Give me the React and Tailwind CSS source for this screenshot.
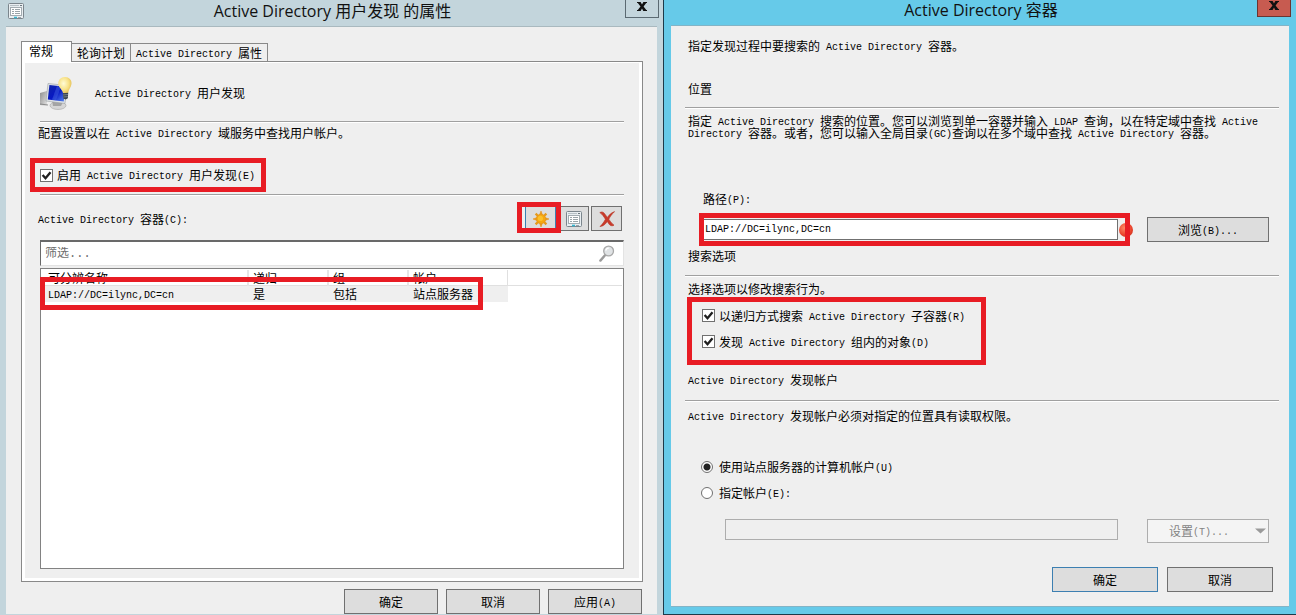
import React from "react";

const containers = [
  { path: "LDAP://DC=ilync,DC=cn", recursive: "是", group: "包括", account: "站点服务器" },
];

// Latin runs are set in a half-width mono face, Chinese runs keep the 12px grid
const Mixed = ({ children }) =>
  children.split(/([\x20-\x7e]+)/).map((part, i) =>
    i % 2 ? (
      <span
        key={i}
        className="font-['Liberation_Mono',monospace] text-[10px] leading-[0px] align-[1px] whitespace-pre-wrap"
      >
        {part}
      </span>
    ) : (
      part
    )
  );

const CloseMark = () => (
  <svg viewBox="0 0 10 9" className="w-[10px] h-[9px]" aria-hidden="true">
    <path
      d="M0 0h3.6L5 2.4 6.4 0H10v1H9.2L6.6 4.4 9.3 8H10v1H6.3L5 6.6 3.6 9H0V8h.8l2.7-3.6L.8 1H0z"
      fill="#111"
    />
  </svg>
);

const ListIcon = () => (
  <svg viewBox="0 0 16 16" className="w-4 h-4" aria-hidden="true">
    <rect x="0.5" y="0.5" width="15" height="15" rx="1" fill="#e9eef1" stroke="#7b858c" />
    <path d="M2 2.5h9" stroke="#b7c0c5" />
    <path d="M12 2.5h2" stroke="#6d7880" />
    <rect x="2.5" y="4.5" width="11" height="8" fill="#fff" stroke="#a3acb1" />
    <path d="M4 6.5h2M7 6.5h5M4 8.5h2M7 8.5h5M4 10.5h2M7 10.5h5" stroke="#9aa4a9" />
    <path d="M6 14.5h3" stroke="#35b6cf" strokeWidth="1.6" />
    <path d="M10 14.5h3" stroke="#9aa4aa" />
  </svg>
);

const SunIcon = () => (
  <svg viewBox="0 0 16 16" className="w-4 h-4" aria-hidden="true">
    <path
      d="M8 0l1.300 3.600h-2.600zM8 16l1.300-3.600h-2.600zM0 8l3.600-1.300v2.600zM16 8l-3.600-1.300v2.600z"
      fill="#e8951a"
      stroke="#e8951a"
      strokeWidth="0.600"
    />
    <path d="M2.600 2.600l10.800 10.800M13.400 2.600L2.600 13.400" stroke="#e59a1c" strokeWidth="2.200" />
    <circle cx="8" cy="8" r="4.700" fill="#f5a80f" stroke="#e5941a" strokeWidth="0.800" />
    <circle cx="7.400" cy="7.400" r="2.600" fill="#fcc02a" />
  </svg>
);

const DeleteIcon = () => (
  <svg viewBox="0 0 16 16" className="w-4 h-4" aria-hidden="true">
    <path
      d="M.8 1.600C2.800.4 4.600 1 5.800 3L8.400 6.400C10.200 3.800 12.400 1.600 15.600.6 13 3 11.200 5.400 9.800 8.200 11.200 10.400 12.800 12.600 15 14.200 12.600 15.400 11 14.600 9.800 12.800L8.200 10.400C6.600 13 5 14.800 1 15.600 3.400 13.200 5 11 6.400 8.200 4.800 5.600 3.200 3.200.8 1.600z"
      fill="#c93a2b"
      stroke="#b5301f"
      strokeWidth="0.6"
    />
  </svg>
);

const SearchIcon = () => (
  <svg viewBox="0 0 16 17" className="w-4 h-[17px]" aria-hidden="true">
    <path d="M6 10.200L1.400 15.600" stroke="#9b9b9b" strokeWidth="2.400" strokeLinecap="round" />
    <circle cx="9.600" cy="6" r="4.900" fill="#e0e3e5" stroke="#a8a8a8" strokeWidth="1.300" />
    <path d="M6.800 5.600a3 3 0 0 1 3-2.400" stroke="#fff" strokeWidth="1.200" fill="none" />
  </svg>
);

const DiscoveryIcon = () => (
  <svg viewBox="0 0 32 34" className="w-8 h-[34px]" aria-hidden="true">
    <defs>
      <linearGradient id="screen" x1="0" y1="0" x2="1" y2="1">
        <stop offset="0" stopColor="#1226a8" />
        <stop offset="0.5" stopColor="#0718c4" />
        <stop offset="1" stopColor="#5b8cf0" />
      </linearGradient>
      <radialGradient id="bulb" cx="0.4" cy="0.4" r="0.65">
        <stop offset="0" stopColor="#fffbd6" />
        <stop offset="0.6" stopColor="#f8e287" />
        <stop offset="1" stopColor="#e2bd55" />
      </radialGradient>
      <linearGradient id="metal" x1="0" y1="0" x2="1" y2="1">
        <stop offset="0" stopColor="#8d8d8d" />
        <stop offset="1" stopColor="#e4e4e4" />
      </linearGradient>
    </defs>
    <path d="M0 17l7-2v15l-7-1z" fill="url(#metal)" />
    <path d="M0 28l8 1" stroke="#777" strokeWidth="0.8" />
    <ellipse cx="18" cy="29.500" rx="8" ry="4" fill="#d6d6d6" stroke="#999" strokeWidth="0.500" />
    <path d="M12 24l11 2-2 4h-8z" fill="#a4a4a4" />
    <path d="M8 7.500l19 2-2 18-19-2.500z" fill="#dfe3e6" stroke="#9a9fa3" strokeWidth="0.600" />
    <path d="M9.400 9l16 1.800-1.600 14.800-16-2.200z" fill="url(#screen)" />
    <path d="M17 10l4 .4-5 13.800-4-.500z" fill="#3f5fe0" opacity="0.500" />
    <path
      d="M25 1c4.200 0 6.800 3 6.500 6.700-.3 3.600-2.900 5.300-3.400 9.300l-5 .3c-.6-4-4.600-5.400-4.800-9.300C18.100 4 20.800 1 25 1z"
      fill="url(#bulb)"
    />
    <path d="M22.800 17.200l5.400-.4-.3 5.400-2.200 1.400-2.400-1.200z" fill="#39434c" />
    <path d="M23 19l5-.5M23.200 21l4.600-.4" stroke="#8c98a0" strokeWidth="0.700" />
  </svg>
);

const Rule = ({ className }) => (
  <div className={`h-0.5 border-t border-[#a0a0a0] bg-white ${className}`} />
);

const Check = ({ label }) => (
  <label className="flex items-center gap-1 h-[13px]">
    <span className="relative w-[13px] h-[13px] shrink-0">
      <input
        type="checkbox"
        defaultChecked
        className="peer appearance-none block w-[13px] h-[13px] bg-white border border-[#707070]"
      />
      <svg
        viewBox="0 0 13 13"
        className="absolute inset-0 hidden peer-checked:block pointer-events-none"
        aria-hidden="true"
      >
        <path d="M2.600 6l2.900 3.200 5-6" fill="none" stroke="#1f1f1f" strokeWidth="2.300" />
      </svg>
    </span>
    <span className="whitespace-nowrap">
      <Mixed>{label}</Mixed>
    </span>
  </label>
);

const Radio = ({ label, checked }) => (
  <label className="flex items-center gap-1.5 h-[13px]">
    <input
      type="radio"
      name="account"
      defaultChecked={checked}
      className="appearance-none w-3 h-3 shrink-0 rounded-full bg-white border border-[#707070] checked:bg-[radial-gradient(#222_0_3px,#fff_4px)]"
    />
    <span>
      <Mixed>{label}</Mixed>
    </span>
  </label>
);

const Button = ({ className, children }) => (
  <button
    className={`h-[25px] flex items-center justify-center bg-[#dddddd] border ${className}`}
  >
    <span>
      <Mixed>{children}</Mixed>
    </span>
  </button>
);

const ToolButton = ({ label, children, className = "border-[#707070]" }) => (
  <button
    aria-label={label}
    className={`w-[31px] h-[25px] flex items-center justify-center bg-[#dddddd] border ${className}`}
  >
    {children}
  </button>
);

const PropertiesDialog = () => (
  <section className="bg-[#c3d5dc] px-1.5 min-w-0">
    <header className="grid grid-cols-[1fr_auto_1fr] h-[26px] -mr-0.5">
      <div className="pl-0.5 pt-[3px]">
        <ListIcon />
      </div>
      <h1 className="font-['Open_Sans','Noto_Sans_CJK_SC',sans-serif] text-[16px] leading-[22px] text-[#111]">
        Active Directory 用户发现 的属性
      </h1>
      <button
        aria-label="关闭"
        className="justify-self-end w-[34px] h-[18px] pb-1 flex items-center justify-center border border-t-0 border-[#5b6a72]"
      >
        <CloseMark />
      </button>
    </header>

    <div className="bg-[#efefef] border-t border-[#a9b9bf] pl-[15px] pr-[14px] pt-[14px]">
      {/* Tabs */}
      <div role="tablist" className="relative flex items-end -mb-px">
        <button
          role="tab"
          aria-selected="true"
          className="w-[51px] h-[21px] pl-[7px] pb-0.5 text-left bg-white border border-b-0 border-[#898989]"
        >
          常规
        </button>
        <button
          role="tab"
          className="h-[19px] px-[5px] border-y border-r border-[#898989]"
        >
          轮询计划
        </button>
        <button
          role="tab"
          className="h-[19px] px-[5px] border-y border-r border-[#898989]"
        >
          <Mixed>Active Directory 属性</Mixed>
        </button>
      </div>

      <div className="border border-[#898989]">
        <div className="border-[3px] border-t border-white pl-[5px] pr-[15px] pt-[13px] pb-[9px]">
          <div className="flex items-center gap-[23px] pl-2.5">
            <DiscoveryIcon />
            <h2>
              <Mixed>Active Directory 用户发现</Mixed>
            </h2>
          </div>
          <Rule className="ml-2.5 mt-[11px]" />
          <p className="pl-2 mt-1">
            <Mixed>配置设置以在 Active Directory 域服务中查找用户帐户。</Mixed>
          </p>
          <div className="w-fit h-[34px] mt-[19px] flex items-center pl-[5px] pr-1.5 border-[5px] border-[#e81c24]">
            <Check label="启用 Active Directory 用户发现(E)" />
          </div>
          <Rule className="ml-2.5 mt-0.5" />

          {/* Toolbar */}
          <div className="flex items-center justify-between pl-2 pr-0.5 mt-2.5">
            <h3>
              <Mixed>Active Directory 容器(C):</Mixed>
            </h3>
            <div className="flex gap-0.5">
              <div className="relative z-10">
                <ToolButton label="新建" className="border-[#3c7fb1]">
                  <SunIcon />
                </ToolButton>
                <div className="absolute -left-2 -right-[5px] -top-1 -bottom-0.5 border-[5px] border-[#e81c24] pointer-events-none" />
              </div>
              <ToolButton label="属性">
                <ListIcon />
              </ToolButton>
              <ToolButton label="删除">
                <DeleteIcon />
              </ToolButton>
            </div>
          </div>

          <div className="ml-2.5 mt-[9px] h-[26px] flex items-center pl-1 pr-2 bg-white border border-[#e3e3e3] border-t-2 border-t-[#696969] border-l-[#696969]">
            <input
              type="text"
              aria-label="筛选"
              placeholder="筛选..."
              className="flex-1 min-w-0 bg-transparent outline-none font-['Liberation_Mono','Noto_Sans_CJK_SC',monospace] placeholder:text-[#6d6d6d]"
            />
            <SearchIcon />
          </div>

          {/* Containers list */}
          <div className="relative ml-2.5 mt-0.5 h-[301px] bg-white border border-[#828282] p-px">
            <div className="border-b border-[#e0e0e0] h-4">
              <div className="w-[466px] h-4 border-r border-[#e0e0e0]" />
            </div>
            <table className="-mt-4 w-[466px] table-fixed border-collapse text-left">
              <colgroup>
                <col className="w-[206px]" />
                <col className="w-[80px]" />
                <col className="w-[80px]" />
                <col className="w-[100px]" />
              </colgroup>
              <thead>
                <tr className="h-4">
                  <th className="font-normal pl-1.5 py-0 border-r-2 border-[#e5e5e5]">可分辨名称</th>
                  <th className="font-normal pl-1 py-0 border-r-2 border-[#e5e5e5]">递归</th>
                  <th className="font-normal pl-1 py-0 border-r-2 border-[#e5e5e5]">组</th>
                  <th className="font-normal pl-1 py-0">帐户</th>
                </tr>
              </thead>
              <tbody>
                {containers.map((c) => (
                  <tr key={c.path} className="h-4 bg-[#efefef]">
                    <td className="pl-1.5 py-0">
                      <Mixed>{c.path}</Mixed>
                    </td>
                    <td className="pl-[5px] py-0">{c.recursive}</td>
                    <td className="pl-[5px] py-0">{c.group}</td>
                    <td className="pl-[5px] py-0">{c.account}</td>
                  </tr>
                ))}
              </tbody>
            </table>
            <div className="absolute -left-px top-2 w-[443px] h-[33px] border-[5px] border-[#e81c24] pointer-events-none" />
          </div>
        </div>
      </div>

      <footer className="flex justify-end gap-2 pt-[7px] pr-px">
        <Button className="w-[94px] border-[#707070]">确定</Button>
        <Button className="w-[94px] border-[#707070]">取消</Button>
        <Button className="w-[94px] border-[#707070]">应用(A)</Button>
      </footer>
    </div>
  </section>
);

const ContainerDialog = () => (
  <section className="bg-[#66cae9] border-l border-b border-[#1d3a4a] px-[7px] pb-[7px] min-w-0">
    <header className="grid grid-cols-[1fr_auto_1fr] h-[25px] -mr-0.5">
      <div />
      <h1 className="font-['Open_Sans','Noto_Sans_CJK_SC',sans-serif] text-[16px] leading-5 text-[#111]">
        Active Directory 容器
      </h1>
      <button
        aria-label="关闭"
        className="justify-self-end w-[34px] h-[17px] pb-1.5 flex items-center justify-center bg-[#c75b50] border border-t-0 border-[#6b3431]"
      >
        <CloseMark />
      </button>
    </header>

    <div className="bg-[#efefef] border-y border-[#83b4c6] pl-[14px] pr-2.5 pt-[14px] pb-[14px]">
      <p className="pl-[3px]">
        <Mixed>指定发现过程中要搜索的 Active Directory 容器。</Mixed>
      </p>

      {/* Location */}
      <h2 className="pl-[3px] mt-[31px]">位置</h2>
      <Rule className="mt-3" />
      <p className="pl-[3px] mt-1.5">
        <Mixed>
          指定 Active Directory 搜索的位置。您可以浏览到单一容器并输入 LDAP 查询，以在特定域中查找 Active Directory 容器。或者，您可以输入全局目录(GC)查询以在多个域中查找 Active Directory 容器。
        </Mixed>
      </p>
      <label htmlFor="path" className="block pl-[18px] mt-[54px]">
        <Mixed>路径(P):</Mixed>
      </label>
      <div className="flex items-center gap-[17px] pl-[14px] pr-2.5 mt-2">
        <div className="relative flex-1 min-w-0 h-[33px] flex items-center pl-1 pr-3">
          <input
            id="path"
            type="text"
            defaultValue="LDAP://DC=ilync,DC=cn"
            className="w-full h-[21px] pl-px bg-white border border-[#707070] outline-none font-['Liberation_Mono',monospace] text-[10px]"
          />
          <span className="absolute -right-[3px] w-[14px] h-[14px] rounded-full bg-[radial-gradient(circle_at_40%_35%,#ff8a66,#e8402a_60%,#b5301f)]" />
          <div className="absolute inset-0 border-[5px] border-[#e81c24] pointer-events-none" />
        </div>
        <Button className="w-[122px] border-[#707070]">浏览(B)...</Button>
      </div>

      {/* Search options */}
      <h2 className="pl-[3px] mt-1">搜索选项</h2>
      <Rule className="mt-[13px]" />
      <p className="pl-[3px] mt-1.5">选择选项以修改搜索行为。</p>
      <div className="w-fit h-[68px] ml-0.5 mt-0.5 pl-2.5 pr-4 pt-[7px] flex flex-col gap-[13px] border-[5px] border-[#e81c24]">
        <Check label="以递归方式搜索 Active Directory 子容器(R)" />
        <Check label="发现 Active Directory 组内的对象(D)" />
      </div>

      {/* Discovery account */}
      <h2 className="pl-[3px] mt-[9px]">
        <Mixed>Active Directory 发现帐户</Mixed>
      </h2>
      <Rule className="mt-[14px]" />
      <p className="pl-[3px] mt-2">
        <Mixed>Active Directory 发现帐户必须对指定的位置具有读取权限。</Mixed>
      </p>
      <div className="flex flex-col gap-[13px] pl-4 mt-[38px]">
        <Radio label="使用站点服务器的计算机帐户(U)" checked />
        <Radio label="指定帐户(E):" />
      </div>
      <div className="flex items-start gap-[29px] pl-10 pr-2.5 mt-5">
        <input
          type="text"
          disabled
          aria-label="指定帐户"
          className="flex-1 min-w-0 h-[21px] bg-[#efefef] border border-[#adadad]"
        />
        <button
          disabled
          aria-haspopup="menu"
          className="w-[122px] h-6 flex items-center justify-between pl-[21px] pr-0.5 bg-[#f4f4f4] border border-[#adadad] text-[#838383]"
        >
          <span>
            <Mixed>设置(T)...</Mixed>
          </span>
          <svg viewBox="0 0 11 6" className="w-[11px] h-1.5" aria-hidden="true">
            <path d="M0 .5h11L5.500 5.500z" fill="#9a9a9a" />
          </svg>
        </button>
      </div>

      <footer className="flex justify-end gap-[9px] pr-1.5 mt-6">
        <Button className="w-[106px] border-[#3c7fb1]">确定</Button>
        <Button className="w-[106px] border-[#707070]">取消</Button>
      </footer>
    </div>
  </section>
);

const App = () => (
  <main className="grid grid-cols-[663fr_633fr] font-['Noto_Sans_CJK_SC',sans-serif] text-[12px] leading-[12px] text-black">
    <PropertiesDialog />
    <ContainerDialog />
  </main>
);

export default App;
